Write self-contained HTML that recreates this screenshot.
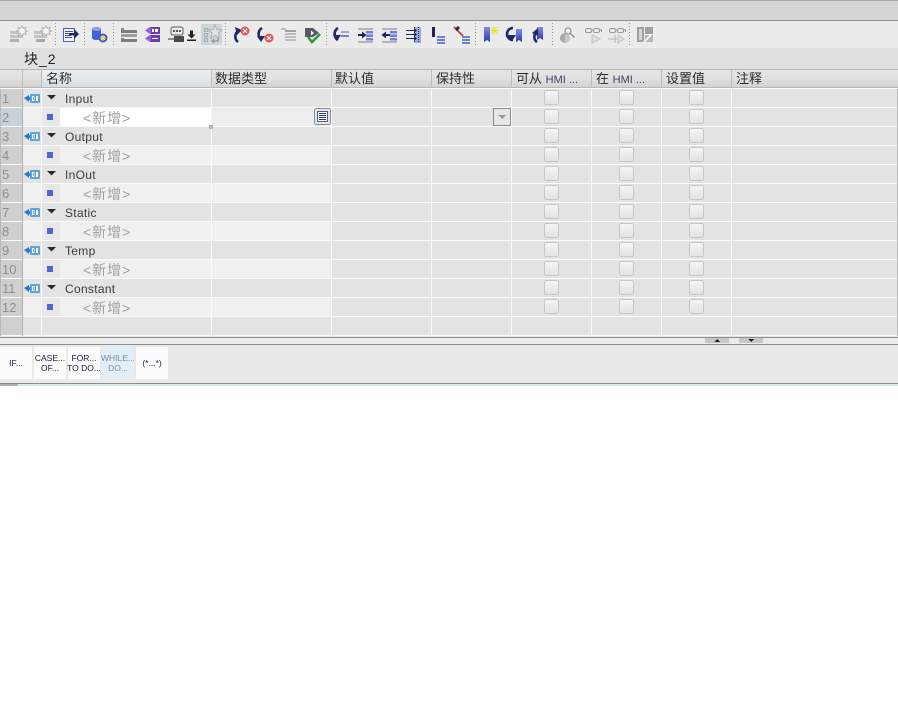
<!DOCTYPE html>
<html><head><meta charset="utf-8"><style>
html,body{margin:0;padding:0;background:#fff;width:898px;height:728px;overflow:hidden}
svg{display:block;position:absolute;left:0;top:0}
text{font-family:"Liberation Sans","WenQuanYi Zen Hei","Noto Sans CJK SC",sans-serif;font-size:12px;fill:#333}
.c{font-size:13px;fill:#2c2c2c}
.n{fill:#8f8f8f;font-size:13px}
.v{fill:#a0a0a0;font-size:14px;letter-spacing:1px}
.s{font-size:8.500px;fill:#161a40;text-anchor:middle}
.nm{fill:#3a3a3a;letter-spacing:.3px}
</style></head><body>
<svg width="898" height="728" viewBox="0 0 898 728" xmlns="http://www.w3.org/2000/svg" shape-rendering="crispEdges">
<defs>
<linearGradient id="h" x1="0" y1="0" x2="0" y2="1"><stop offset="0" stop-color="#e6e6e6"/><stop offset=".5" stop-color="#e0e0e0"/><stop offset="1" stop-color="#d4d4d4"/></linearGradient>
<linearGradient id="hb" x1="0" y1="0" x2="0" y2="1"><stop offset="0" stop-color="#eef1f3"/><stop offset="1" stop-color="#d7dee3"/></linearGradient>
<linearGradient id="cb" x1="0" y1="0" x2="0" y2="1"><stop offset="0" stop-color="#f6f6f6"/><stop offset="1" stop-color="#e2e2e2"/></linearGradient>
<linearGradient id="tb" x1="0" y1="0" x2="0" y2="1"><stop offset="0" stop-color="#7d8ee8"/><stop offset="1" stop-color="#2a3bb0"/></linearGradient>
<g id="cb1"><rect x=".5" y=".5" width="14" height="14" rx="2" fill="url(#cb)" stroke="#c6c6c6"/></g>
<g id="tag"><path d="M0 5L5 2V4H7V7H5V9Z" fill="#2f78c4"/><rect x="6" y="1" width="10" height="9" rx="1" fill="#5aa6dc"/><rect x="8" y="3" width="2.500" height="5" fill="#fff"/><rect x="9" y="4" width=".8" height="3" fill="#4a96d0"/><rect x="12" y="3" width="2" height="5" fill="#fff"/></g>
<g id="tri"><path d="M0 0H9L4.500 4.500Z" fill="#2a2a2a" shape-rendering="auto"/></g>
<g id="sq"><rect x="0" y="0" width="6" height="6" fill="#4f66d0"/></g>
</defs>

<rect width="898" height="386" fill="#e9e9e9"/>
<rect y="0" width="898" height="1" fill="#a6a6a6"/>
<rect y="1" width="898" height="19" fill="#d4d4d4"/>
<rect y="20" width="898" height="1" fill="#8e8e8e"/>
<rect y="21" width="898" height="27" fill="#ebebeb"/>
<rect y="48" width="898" height="21" fill="#e0e0e0"/>

<g fill="#9a9a9a">
<path d="M55 23h1v1h-1zM55 26h1v1h-1zM55 29h1v1h-1zM55 32h1v1h-1zM55 35h1v1h-1zM55 38h1v1h-1zM55 41h1v1h-1zM55 44h1v1h-1z"/>
<path d="M84 23h1v1h-1zM84 26h1v1h-1zM84 29h1v1h-1zM84 32h1v1h-1zM84 35h1v1h-1zM84 38h1v1h-1zM84 41h1v1h-1zM84 44h1v1h-1z"/>
<path d="M113 23h1v1h-1zM113 26h1v1h-1zM113 29h1v1h-1zM113 32h1v1h-1zM113 35h1v1h-1zM113 38h1v1h-1zM113 41h1v1h-1zM113 44h1v1h-1z"/>
<path d="M225 23h1v1h-1zM225 26h1v1h-1zM225 29h1v1h-1zM225 32h1v1h-1zM225 35h1v1h-1zM225 38h1v1h-1zM225 41h1v1h-1zM225 44h1v1h-1z"/>
<path d="M326 23h1v1h-1zM326 26h1v1h-1zM326 29h1v1h-1zM326 32h1v1h-1zM326 35h1v1h-1zM326 38h1v1h-1zM326 41h1v1h-1zM326 44h1v1h-1z"/>
<path d="M475 23h1v1h-1zM475 26h1v1h-1zM475 29h1v1h-1zM475 32h1v1h-1zM475 35h1v1h-1zM475 38h1v1h-1zM475 41h1v1h-1zM475 44h1v1h-1z"/>
<path d="M552 23h1v1h-1zM552 26h1v1h-1zM552 29h1v1h-1zM552 32h1v1h-1zM552 35h1v1h-1zM552 38h1v1h-1zM552 41h1v1h-1zM552 44h1v1h-1z"/>
<path d="M629 23h1v1h-1zM629 26h1v1h-1zM629 29h1v1h-1zM629 32h1v1h-1zM629 35h1v1h-1zM629 38h1v1h-1zM629 41h1v1h-1zM629 44h1v1h-1z"/>
</g>

<g shape-rendering="auto">
<!-- 1,2 -->
<g fill="#c2c2c2"><rect x="10" y="31" width="11" height="3"/><rect x="10" y="35" width="13" height="3"/><rect x="10" y="39" width="9" height="3" fill="#b0b0b0"/></g>
<path d="M22 26l1.500 2.500 2.500-1-1 2.500 2.500 1-2.500 1 1 2.500-2.500-1-1.500 2.500-1.500-2.500-2.500 1 1-2.500-2.500-1 2.500-1-1-2.500 2.500 1z" fill="#f7f7f7" stroke="#a8a8a8" stroke-width=".8"/>
<g fill="#c2c2c2"><rect x="34" y="31" width="11" height="3"/><rect x="34" y="35" width="13" height="3"/><rect x="36" y="39" width="9" height="3" fill="#a8a8a8"/></g>
<path d="M46 26l1.500 2.500 2.500-1-1 2.500 2.500 1-2.500 1 1 2.500-2.500-1-1.500 2.500-1.500-2.500-2.500 1 1-2.500-2.500-1 2.500-1-1-2.500 2.500 1z" fill="#f7f7f7" stroke="#a8a8a8" stroke-width=".8"/>
<!-- 3 -->
<rect x="63.500" y="28.500" width="11" height="13" fill="#f4f6fc" stroke="#4a62c4"/>
<g fill="#4a5590"><rect x="65" y="31" width="8" height="1"/><rect x="65" y="33" width="6" height="1"/><rect x="65" y="35" width="6" height="1"/><rect x="65" y="37" width="7" height="1"/></g>
<path d="M69 33h5v-4l5 5-5 5v-3.500h-5z" fill="#1f2a60"/>
<!-- 4 -->
<path d="M92 29a4.500 2 0 0 1 9 0v9a4.500 2 0 0 1-9 0z" fill="#4660d4"/>
<ellipse cx="96.500" cy="29" rx="4.500" ry="2" fill="#8fa0ec"/>
<circle cx="103" cy="38" r="4.500" fill="#3d56c8"/>
<path d="M103 35v6M100 38h6M101 36l4 4M105 36l-4 4" stroke="#ffe95a" stroke-width="1"/>
<!-- 5 -->
<g><rect x="121" y="28" width="3" height="2" fill="#8c8c8c"/><rect x="121" y="30" width="16" height="3" fill="#7d7d7d"/><rect x="121" y="34" width="16" height="3" fill="#a0a0a0"/><rect x="121" y="38" width="3" height="1" fill="#8c8c8c"/><rect x="121" y="39" width="16" height="3" fill="#7d7d7d"/></g>
<!-- 6 -->
<rect x="150" y="27" width="10" height="7" fill="#6a3cb0"/><rect x="150" y="35" width="10" height="7" fill="#6a3cb0"/>
<path d="M145 30.500l4-3h2v6h-2zM145 38.500l4-3h2v6h-2z" fill="#8f64d8"/>
<rect x="152" y="29" width="2" height="3" fill="#fff"/><rect x="155" y="29" width="3" height="3" fill="#fff"/><rect x="152" y="38" width="6" height="1" fill="#fff"/>
<!-- 7 -->
<path d="M173 27h8a2 2 0 0 1 2 2v4a2 2 0 0 1-2 2h-8a2 2 0 0 1-2-2v-4a2 2 0 0 1 2-2z" fill="#ececec" stroke="#5a5a5a"/>
<circle cx="174" cy="31" r="1" fill="#222"/><circle cx="177" cy="31" r="1" fill="#222"/><circle cx="180" cy="31" r="1" fill="#222"/>
<rect x="174" y="36" width="10" height="6" fill="#4a4a4a"/><path d="M168 39h6" stroke="#333"/>
<path d="M190 30.500h3v4h2.500l-4 4-4-4h2.500z" fill="#222"/><rect x="187" y="39.500" width="9" height="1.500" fill="#222"/>
<!-- 8 -->
<rect x="201" y="24" width="21" height="21" fill="#cfd6da"/>
<g fill="none" stroke="#a3abb3"><rect x="204.500" y="28.500" width="3" height="3"/><rect x="204.500" y="33.500" width="3" height="3"/><rect x="204.500" y="38.500" width="3" height="3"/></g>
<path d="M215 25l2 4.500 5 .5-3.500 3 1 5-4.500-2.500-4 2.500 1-5-3.500-3 4.500-.5z" fill="#dfe3e6" stroke="#a8b0b8"/>
<path d="M218 38v3h-6m2-2l-2 2 2 2" fill="none" stroke="#8a929a" stroke-width="1.200"/>
<!-- 9 -->
<path d="M238 42a7 7 0 0 1 0-11" fill="none" stroke="#20286a" stroke-width="2.600"/>
<path d="M235 27l7 3-5 5z" fill="#20286a"/>
<circle cx="245" cy="31" r="4.500" fill="#e05a5a"/><path d="M243 29l4 4M247 29l-4 4" stroke="#fff" stroke-width="1.200"/>
<!-- 10 -->
<path d="M262 40a7 7 0 0 1 0-12" fill="none" stroke="#20286a" stroke-width="2.600"/>
<path d="M257 36h8l-4 6z" fill="#20286a"/>
<circle cx="269" cy="38" r="4.500" fill="#e05a5a"/><path d="M267 36l4 4M271 36l-4 4" stroke="#fff" stroke-width="1.200"/>
<!-- 11 -->
<g fill="#bdbdbd"><rect x="281" y="28" width="5" height="2"/><rect x="285" y="30" width="11" height="2" fill="#a2a2a2"/><rect x="285" y="33" width="11" height="2"/><rect x="285" y="36" width="11" height="2"/><rect x="285" y="39" width="11" height="2"/></g>
<!-- 12 -->
<path d="M305 28h8l6 5-6 4h-8z" fill="#55596a"/><path d="M311 30.500l3 2.500-3 2.500z" fill="#fff"/>
<path d="M308 37l4 5 8-8" fill="none" stroke="#2e9a45" stroke-width="2.600"/>
<!-- 13 -->
<path d="M338 40a7 7 0 0 1 0-12" fill="none" stroke="#20286a" stroke-width="2.600"/>
<path d="M333 35h8l-4 6z" fill="#20286a"/>
<rect x="341" y="31" width="8" height="2" fill="#a0a8c0"/><rect x="341" y="35" width="8" height="2" fill="#6d80d8"/>
<!-- 14 -->
<g fill="#b5b5b5"><rect x="358" y="28" width="15" height="2"/><rect x="358" y="41" width="15" height="2"/></g>
<rect x="366" y="31" width="7" height="2.500" fill="#6d80d8"/><rect x="366" y="34.500" width="7" height="2.500" fill="#6d80d8"/><rect x="366" y="38" width="7" height="2.500" fill="#6d80d8"/>
<path d="M358 34h4v-2.500l4.500 3.500-4.500 3.500v-2.500h-4z" fill="#1d2560"/>
<!-- 15 -->
<g fill="#b5b5b5"><rect x="382" y="28" width="15" height="2"/><rect x="382" y="41" width="15" height="2"/></g>
<rect x="390" y="31" width="7" height="2.500" fill="#6d80d8"/><rect x="390" y="34.500" width="7" height="2.500" fill="#6d80d8"/><rect x="390" y="38" width="7" height="2.500" fill="#6d80d8"/>
<path d="M390 34h-4v-2.500l-4.500 3.500 4.500 3.500v-2.500h4z" fill="#1d2560"/>
<!-- 16 -->
<rect x="414" y="27" width="7" height="16" fill="#9aa8e4"/>
<g fill="#1d2560"><path d="M406 30h8v-2l3 2.500-3 2.500v-2h-8zM406 34h8v-2l3 2.500-3 2.500v-2h-8zM406 38h8v-2l3 2.500-3 2.500v-2h-8z"/></g>
<path d="M414.500 27v16M418.500 27v16" stroke="#333" stroke-dasharray="1 1"/>
<!-- 17 -->
<rect x="432" y="27" width="3" height="10" fill="#1d2560"/>
<g fill="#6d80d8"><rect x="437" y="36" width="8" height="2"/><rect x="437" y="39" width="8" height="2"/><rect x="437" y="42" width="8" height="2"/></g>
<!-- 18 -->
<path d="M454 27l9 9" stroke="#d83030" stroke-width="1.800"/>
<path d="M456 30l3-3" stroke="#1d2560" stroke-width="3"/>
<g fill="#6d80d8"><rect x="462" y="36" width="8" height="2"/><rect x="462" y="39" width="8" height="2"/><rect x="462" y="42" width="8" height="2"/></g>
<!-- 19 -->
<path d="M484 27h6v15l-3-2-3 2z" fill="url(#tb)"/>
<path d="M494 26v9M490 30.500h9M491 27.500l6 6M497 27.500l-6 6" stroke="#e8e23a" stroke-width="1.200"/>
<!-- 20 -->
<path d="M516 29h6v13l-3-2-3 2z" fill="url(#tb)"/>
<path d="M513 40a6 6 0 0 1 0-12" fill="none" stroke="#20286a" stroke-width="2.600"/>
<path d="M508 35h8l-4 6z" fill="#20286a"/>
<!-- 21 -->
<path d="M537 27h6v13l-3-2-3 2z" fill="url(#tb)"/>
<path d="M537 42a6 6 0 0 1 0-10" fill="none" stroke="#20286a" stroke-width="2.600"/>
<path d="M532 33l6-5v8z" fill="#20286a"/>
<!-- 22 -->
<circle cx="565" cy="38" r="5" fill="#a8a8a8"/><path d="M565 33a5 5 0 0 1 0 10z" fill="#c8c8c8"/>
<circle cx="568" cy="31" r="3" fill="#eee" stroke="#9a9a9a" stroke-width="1.300"/><path d="M570.500 33.500l4 4" stroke="#9a9a9a" stroke-width="1.600"/>
<!-- 23 -->
<g fill="none" stroke="#9a9a9a" stroke-width="1"><rect x="585.500" y="28.500" width="6" height="4" rx="1.500"/><rect x="593.500" y="28.500" width="6" height="4" rx="1.500"/><path d="M591.500 30h2M599.500 30h2v2"/></g>
<path d="M592 35l8 4-8 4z" fill="#e0e0e0" stroke="#c2c2c2"/>
<!-- 24 -->
<g fill="none" stroke="#9a9a9a" stroke-width="1"><rect x="609.500" y="28.500" width="6" height="4" rx="1.500"/><rect x="617.500" y="28.500" width="6" height="4" rx="1.500"/><path d="M615.500 30h2M623.500 30h2v2"/></g>
<path d="M618 35l6 4-6 4z" fill="#e0e0e0" stroke="#c2c2c2"/><path d="M608 39h10M615 35v8" stroke="#b5b5b5"/>
<!-- 25 -->
<rect x="637" y="27" width="7" height="15" fill="#9f9f9f"/><rect x="639" y="29" width="3" height="11" fill="#d8d8d8"/>
<rect x="645" y="27" width="8" height="7" fill="#9f9f9f"/><rect x="645" y="35" width="8" height="7" fill="#b5b5b5"/>
<path d="M644 42l7-7" stroke="#f2f2f2" stroke-width="2"/>
</g>

<text x="24" y="64" style="font-size:14px;fill:#222;letter-spacing:1px">块_2</text>

<rect y="69" width="898" height="1" fill="#b5b5b5"/>
<rect y="70" width="898" height="17" fill="url(#h)"/>
<rect x="42" y="70" width="170" height="17" fill="url(#hb)"/>
<rect y="87" width="898" height="1" fill="#b8b8b8"/>
<rect y="88" width="898" height="1" fill="#fcfcfc"/>
<g fill="#bdbdbd"><rect x="22" y="70" width="1" height="18"/><rect x="41" y="70" width="1" height="18"/><rect x="211" y="70" width="1" height="18"/><rect x="331" y="70" width="1" height="18"/><rect x="431" y="70" width="1" height="18"/><rect x="511" y="70" width="1" height="18"/><rect x="591" y="70" width="1" height="18"/><rect x="661" y="70" width="1" height="18"/><rect x="731" y="70" width="1" height="18"/></g>
<text x="46" y="83" class="c">名称</text>
<text x="215" y="83" class="c">数据类型</text>
<text x="335" y="83" class="c">默认值</text>
<text x="436" y="83" class="c">保持性</text>
<text x="516" y="83" class="c">可从 <tspan style="font-size:11px;fill:#4a3a6a">HMI ...</tspan></text>
<text x="596" y="83" class="c">在 <tspan style="font-size:11px;fill:#4a3a6a">HMI ...</tspan></text>
<text x="666" y="83" class="c">设置值</text>
<text x="736" y="83" class="c">注释</text>

<rect y="89" width="898" height="248" fill="#e3e3e3"/>
<rect y="89" width="22" height="248" fill="#cfcfcf"/>
<g fill="#f0f0f0">
<rect x="23" y="108" width="309" height="18"/>
<rect x="23" y="146" width="309" height="18"/>
<rect x="23" y="184" width="309" height="18"/>
<rect x="23" y="222" width="309" height="18"/>
<rect x="23" y="260" width="309" height="18"/>
<rect x="23" y="298" width="309" height="18"/>
</g>
<g fill="#e8e8e8"><rect x="42" y="108" width="18" height="18"/><rect x="42" y="146" width="18" height="18"/><rect x="42" y="184" width="18" height="18"/><rect x="42" y="222" width="18" height="18"/><rect x="42" y="260" width="18" height="18"/><rect x="42" y="298" width="18" height="18"/></g>
<rect x="212" y="108" width="120" height="18" fill="#ededed"/>
<rect x="0" y="108" width="22" height="18" fill="#c8d2da"/>
<rect x="60" y="108" width="151" height="18" fill="#fff"/>
<g fill="#fbfbfb">
<rect y="107" width="898" height="1"/><rect y="126" width="898" height="1"/><rect y="145" width="898" height="1"/><rect y="164" width="898" height="1"/><rect y="183" width="898" height="1"/><rect y="202" width="898" height="1"/><rect y="221" width="898" height="1"/><rect y="240" width="898" height="1"/><rect y="259" width="898" height="1"/><rect y="278" width="898" height="1"/><rect y="297" width="898" height="1"/><rect y="316" width="898" height="1"/><rect y="335" width="898" height="1"/>
<rect x="41" y="89" width="1" height="247"/><rect x="211" y="89" width="1" height="247"/><rect x="331" y="89" width="1" height="247"/><rect x="431" y="89" width="1" height="247"/><rect x="511" y="89" width="1" height="247"/><rect x="591" y="89" width="1" height="247"/><rect x="661" y="89" width="1" height="247"/><rect x="731" y="89" width="1" height="247"/>
</g>
<rect x="22" y="89" width="1" height="247" fill="#b0b0b0"/>
<rect x="897" y="89" width="1" height="248" fill="#b8b8b8"/>
<rect x="0" y="89" width="1" height="248" fill="#b8b8b8"/>
<rect x="41.500" y="107.500" width="170" height="19" fill="none" stroke="#f4f7f9"/>
<rect x="209" y="125" width="4" height="4" fill="#a9b7c4"/>

<text x="2" y="103" class="n">1</text><text x="2" y="122" class="n">2</text><text x="2" y="141" class="n">3</text><text x="2" y="160" class="n">4</text><text x="2" y="179" class="n">5</text><text x="2" y="198" class="n">6</text><text x="2" y="217" class="n">7</text><text x="2" y="236" class="n">8</text><text x="2" y="255" class="n">9</text><text x="2" y="274" class="n">10</text><text x="2" y="293" class="n">11</text><text x="2" y="312" class="n">12</text>

<g shape-rendering="auto"><use href="#tag" x="24" y="93"/><use href="#tag" x="24" y="131"/><use href="#tag" x="24" y="169"/><use href="#tag" x="24" y="207"/><use href="#tag" x="24" y="245"/><use href="#tag" x="24" y="283"/></g>
<use href="#tri" x="47" y="95"/><use href="#tri" x="47" y="133"/><use href="#tri" x="47" y="171"/><use href="#tri" x="47" y="209"/><use href="#tri" x="47" y="247"/><use href="#tri" x="47" y="285"/>
<use href="#sq" x="47" y="114"/><use href="#sq" x="47" y="152"/><use href="#sq" x="47" y="190"/><use href="#sq" x="47" y="228"/><use href="#sq" x="47" y="266"/><use href="#sq" x="47" y="304"/>

<text x="65" y="103" class="nm">Input</text><text x="65" y="141" class="nm">Output</text><text x="65" y="179" class="nm">InOut</text><text x="65" y="217" class="nm">Static</text><text x="65" y="255" class="nm">Temp</text><text x="65" y="293" class="nm">Constant</text>
<text x="83" y="123" class="v">&lt;新增&gt;</text><text x="83" y="161" class="v">&lt;新增&gt;</text><text x="83" y="199" class="v">&lt;新增&gt;</text><text x="83" y="237" class="v">&lt;新增&gt;</text><text x="83" y="275" class="v">&lt;新增&gt;</text><text x="83" y="313" class="v">&lt;新增&gt;</text>

<rect x="314.500" y="108.500" width="16" height="16" rx="2" fill="#e6e6e6" stroke="#8a8a8a"/>
<rect x="317.500" y="111.500" width="10" height="10" fill="#fff" stroke="#4a5aa8"/>
<g fill="#2c3580"><rect x="319" y="113" width="7" height="1"/><rect x="319" y="115" width="7" height="1"/><rect x="319" y="117" width="7" height="1"/><rect x="319" y="119" width="7" height="1"/></g>
<rect x="493.500" y="108.500" width="17" height="17" fill="#e6e6e6" stroke="#8a8a8a"/>
<path d="M498 115h8l-4 4z" fill="#9a9a9a"/>

<g>
<use href="#cb1" x="544" y="90"/><use href="#cb1" x="619" y="90"/><use href="#cb1" x="689" y="90"/>
<use href="#cb1" x="544" y="109"/><use href="#cb1" x="619" y="109"/><use href="#cb1" x="689" y="109"/>
<use href="#cb1" x="544" y="128"/><use href="#cb1" x="619" y="128"/><use href="#cb1" x="689" y="128"/>
<use href="#cb1" x="544" y="147"/><use href="#cb1" x="619" y="147"/><use href="#cb1" x="689" y="147"/>
<use href="#cb1" x="544" y="166"/><use href="#cb1" x="619" y="166"/><use href="#cb1" x="689" y="166"/>
<use href="#cb1" x="544" y="185"/><use href="#cb1" x="619" y="185"/><use href="#cb1" x="689" y="185"/>
<use href="#cb1" x="544" y="204"/><use href="#cb1" x="619" y="204"/><use href="#cb1" x="689" y="204"/>
<use href="#cb1" x="544" y="223"/><use href="#cb1" x="619" y="223"/><use href="#cb1" x="689" y="223"/>
<use href="#cb1" x="544" y="242"/><use href="#cb1" x="619" y="242"/><use href="#cb1" x="689" y="242"/>
<use href="#cb1" x="544" y="261"/><use href="#cb1" x="619" y="261"/><use href="#cb1" x="689" y="261"/>
<use href="#cb1" x="544" y="280"/><use href="#cb1" x="619" y="280"/><use href="#cb1" x="689" y="280"/>
<use href="#cb1" x="544" y="299"/><use href="#cb1" x="619" y="299"/><use href="#cb1" x="689" y="299"/>
</g>

<rect y="336" width="898" height="1" fill="#e3e3e3"/>
<rect y="337" width="898" height="1" fill="#8e8e8e"/>
<rect y="338" width="898" height="6" fill="#ebebeb"/>
<rect y="344" width="898" height="1" fill="#8e8e8e"/>
<rect x="705" y="338" width="24" height="5" fill="#c8c8c8"/><rect x="739" y="338" width="24" height="5" fill="#c8c8c8"/>
<path d="M714 342h6l-3-3z" fill="#222"/><path d="M748 339h6l-3 3z" fill="#222"/>

<rect y="345" width="898" height="38" fill="#e9e9e9"/>
<rect x="0" y="347" width="32" height="32" fill="#fbfbfb"/>
<rect x="34" y="347" width="32" height="32" fill="#fbfbfb"/>
<rect x="68" y="347" width="32" height="32" fill="#fbfbfb"/>
<rect x="101" y="347" width="33" height="32" fill="#e0eff8"/>
<rect x="136" y="347" width="32" height="32" fill="#fbfbfb"/>
<text x="16" y="366" class="s">IF...</text>
<text x="50" y="361" class="s">CASE...</text><text x="50" y="371" class="s">OF...</text>
<text x="84" y="361" class="s">FOR...</text><text x="84" y="371" class="s">TO DO...</text>
<text x="118" y="361" class="s" style="fill:#7e8aa8">WHILE...</text><text x="118" y="371" class="s" style="fill:#7e8aa8">DO...</text>
<text x="152" y="366" class="s">(*...*)</text>

<rect y="383" width="898" height="1" fill="#8e8e8e"/>
<rect y="384" width="898" height="2" fill="#d8ece8"/>
<rect x="0" y="384" width="18" height="2" fill="#b0b0b0"/>
<rect y="386" width="898" height="342" fill="#fff"/>
</svg>
</body></html>
